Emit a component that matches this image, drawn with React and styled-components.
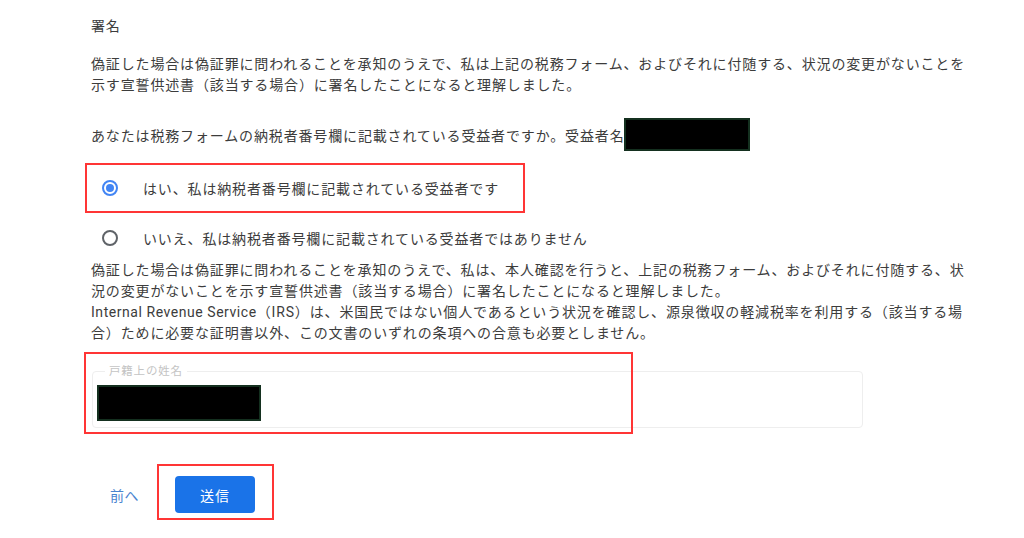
import React from 'react';
import styled, { createGlobalStyle } from 'styled-components';

const GlobalStyle = createGlobalStyle`
  html, body {
    margin: 0;
    padding: 0;
    background: #ffffff;
  }
  body {
    font-family: Roboto, "Noto Sans CJK JP", sans-serif;
    color: #3c3c3c;
  }
`;

const Page = styled.div`
  width: 1024px;
  height: 538px;
  overflow: hidden;
  box-sizing: border-box;
  padding: 16px 0 0 91px;
`;

const Text = styled.p`
  margin: ${props => props.mt || 0}px 0 0;
  width: 900px;
  font-size: 14px;
  line-height: 21px;
  letter-spacing: 0.85px;
  white-space: nowrap;
`;

const Latin = styled.span`
  letter-spacing: 0.55px;
`;

const QuestionRow = styled.div`
  display: flex;
  align-items: center;
  margin-top: 22px;
  height: 33px;
  font-size: 14px;
  letter-spacing: 0.85px;
`;

const Redacted = styled.span`
  display: inline-block;
  box-sizing: border-box;
  width: ${props => props.w}px;
  height: ${props => props.h}px;
  background: #000;
  border: 2px solid #14301f;
`;

const RadioGroup = styled.div`
  display: flex;
  flex-direction: column;
  gap: 6px;
  margin-top: 15px;
`;

const Marked = styled.div`
  position: relative;
`;

const Annotation = styled.div`
  position: absolute;
  left: ${props => props.l}px;
  top: ${props => props.t}px;
  width: ${props => props.w}px;
  height: ${props => props.h}px;
  box-sizing: border-box;
  border: 2px solid #ff3535;
  pointer-events: none;
`;

const RadioRow = styled.label`
  display: flex;
  align-items: center;
  height: 44px;
  padding-left: 11px;
  font-size: 14px;
  letter-spacing: 0.85px;
`;

const RadioCircle = styled.span`
  position: relative;
  flex-shrink: 0;
  width: 16px;
  height: 16px;
  box-sizing: border-box;
  border-radius: 50%;
  border: 2px solid ${props => (props.checked ? '#4285f4' : '#5f6368')};
  margin-right: 25px;

  &::after {
    content: '';
    display: ${props => (props.checked ? 'block' : 'none')};
    position: absolute;
    left: 2px;
    top: 2px;
    width: 8px;
    height: 8px;
    border-radius: 50%;
    background: #4285f4;
  }
`;

const FieldSection = styled.div`
  position: relative;
  margin-top: 8px;
  padding-top: 12px;
`;

const Fieldset = styled.fieldset`
  width: 771px;
  box-sizing: border-box;
  margin: 0 0 0 1px;
  padding: 0 4px 6px;
  border: 1px solid #eeeeee;
  border-radius: 4px;
`;

const Legend = styled.legend`
  margin-left: 8px;
  padding: 0 4px;
  font-size: 11.5px;
  line-height: 14px;
  letter-spacing: 0.8px;
  color: #c4c4c4;
`;

const FieldValue = styled.div`
  margin-top: 7px;
  display: flex;
`;

const Actions = styled.div`
  display: flex;
  align-items: center;
  gap: 36px;
  margin-top: 48px;
  padding-left: 19px;
`;

const BackLink = styled.span`
  font-size: 14px;
  letter-spacing: 0.5px;
  color: #4a84cf;
`;

const SubmitButton = styled.button`
  width: 80px;
  height: 37px;
  border: none;
  border-radius: 4px;
  background: #1a73e8;
  color: #ffffff;
  font-family: Roboto, "Noto Sans CJK JP", sans-serif;
  font-size: 14px;
  letter-spacing: 1px;
`;

const options = [
  { text: 'はい、私は納税者番号欄に記載されている受益者です', checked: true },
  { text: 'いいえ、私は納税者番号欄に記載されている受益者ではありません', checked: false },
];

export default function App() {
  return (
    <>
      <GlobalStyle />
      <Page>
        <Text>署名</Text>
        <Text mt={17}>
          偽証した場合は偽証罪に問われることを承知のうえで、私は上記の税務フォーム、およびそれに付随する、状況の変更がないことを
          <br />
          示す宣誓供述書（該当する場合）に署名したことになると理解しました。
        </Text>
        <QuestionRow>
          あなたは税務フォームの納税者番号欄に記載されている受益者ですか。受益者名
          <Redacted w={126} h={33} />
        </QuestionRow>

        <RadioGroup>
          {options.map(({ text, checked }) =>
            checked ? (
              <Marked key={text}>
                <RadioRow>
                  <RadioCircle checked />
                  {text}
                </RadioRow>
                <Annotation l={-6} t={-3} w={440} h={50} />
              </Marked>
            ) : (
              <RadioRow key={text}>
                <RadioCircle />
                {text}
              </RadioRow>
            )
          )}
        </RadioGroup>

        <Text>
          偽証した場合は偽証罪に問われることを承知のうえで、私は、本人確認を行うと、上記の税務フォーム、およびそれに付随する、状
          <br />
          況の変更がないことを示す宣誓供述書（該当する場合）に署名したことになると理解しました。
          <br />
          <Latin>Internal Revenue Service</Latin>（IRS）は、米国民ではない個人であるという状況を確認し、源泉徴収の軽減税率を利用する（該当する場
          <br />
          合）ために必要な証明書以外、この文書のいずれの条項への合意も必要としません。
        </Text>

        <FieldSection>
          <Fieldset>
            <Legend>戸籍上の姓名</Legend>
            <FieldValue>
              <Redacted w={164} h={36} />
            </FieldValue>
          </Fieldset>
          <Annotation l={-7} t={0} w={549} h={82} />
        </FieldSection>

        <Actions>
          <BackLink>前へ</BackLink>
          <Marked>
            <SubmitButton>送信</SubmitButton>
            <Annotation l={-18} t={-12} w={117} h={56} />
          </Marked>
        </Actions>
      </Page>
    </>
  );
}
